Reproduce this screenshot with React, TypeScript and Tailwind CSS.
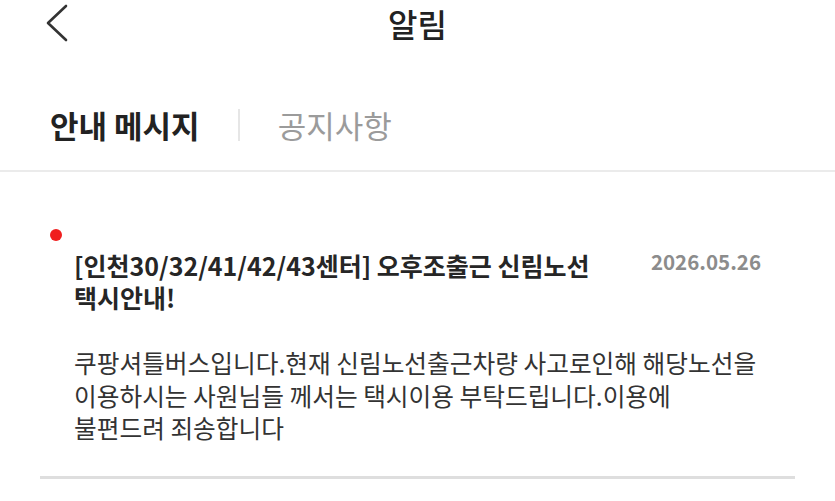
const font = { fontFamily: '"Noto Sans CJK KR", "Noto Sans", sans-serif' };

function BackIcon() {
  return (
    <svg width="24" height="38" viewBox="0 0 24 38" fill="none" className="text-[#333]">
      <polyline
        points="21,2 3,19 21,36"
        stroke="currentColor"
        strokeWidth="2.6"
        strokeLinecap="round"
        strokeLinejoin="round"
      />
    </svg>
  );
}

export default function App() {
  return (
    <div className="w-[835px] h-[501px] bg-white overflow-hidden text-[#222]" style={font}>
      {/* Header */}
      <header className="h-[46px] grid grid-cols-[1fr_auto_1fr] items-center">
        <div className="pl-[45px] flex items-center">
          <BackIcon />
        </div>
        <h1 className="text-[32px] leading-[38px] font-medium text-[#222]">알림</h1>
        <div />
      </header>

      {/* Tabs */}
      <nav className="pt-[61px] pb-[27px] pl-[50px] flex items-center border-b-2 border-[#ebebeb]">
        <span className="text-[31px] leading-[36px] font-bold text-[#222]">안내 메시지</span>
        <span className="mx-[38px] w-[2px] h-[32px] bg-[#e6e6e6]" />
        <span className="text-[31px] leading-[36px] text-[#9b9b9b]">공지사항</span>
      </nav>

      {/* Notice item */}
      <section className="mx-[40px] pt-[57px] pb-[32px] border-b-[3px] border-[#dedede]">
        <div className="ml-[10px] w-[12px] h-[12px] rounded-full bg-[#f01e1e]" />
        <div className="mt-[8px] pl-[34px] pr-[34px] flex items-start justify-between">
          <h2 className="w-[570px] break-keep text-[25px] leading-[32px] font-bold text-[#262626]">
            [인천30/32/41/42/43센터] 오후조출근 신림노선 택시안내!
          </h2>
          <span className="pt-[1px] text-[20.5px] leading-[22px] font-semibold text-[#8c8c8c] whitespace-nowrap">
            2026.05.26
          </span>
        </div>
        <p className="mt-[33px] pl-[34px] pr-[34px] break-keep text-[24.7px] leading-[32.5px] text-[#333]">
          쿠팡셔틀버스입니다.현재 신림노선출근차량 사고로인해 해당노선을 이용하시는 사원님들 께서는 택시이용 부탁드립니다.이용에 불편드려 죄송합니다
        </p>
      </section>
    </div>
  );
}
